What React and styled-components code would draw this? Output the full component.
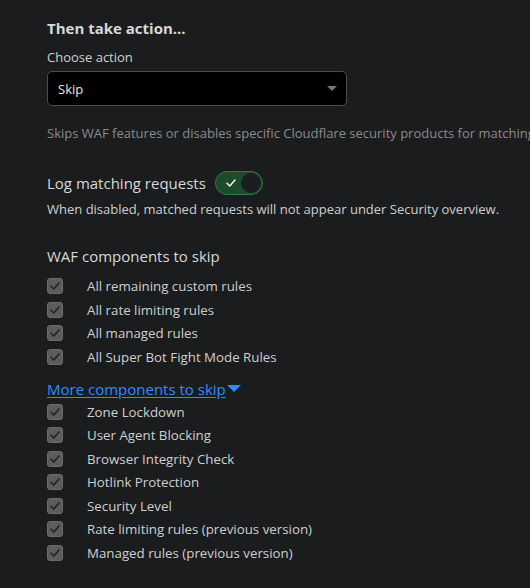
import styled, { createGlobalStyle } from "styled-components";

const GlobalStyle = createGlobalStyle`
  body {
    margin: 0;
    background: #1b1c1e;
    font-family: "Open Sans", "Liberation Sans", sans-serif;
    color: #d6d6d6;
  }
`;

const wafItems = [
  "All remaining custom rules",
  "All rate limiting rules",
  "All managed rules",
  "All Super Bot Fight Mode Rules",
];

const moreItems = [
  "Zone Lockdown",
  "User Agent Blocking",
  "Browser Integrity Check",
  "Hotlink Protection",
  "Security Level",
  "Rate limiting rules (previous version)",
  "Managed rules (previous version)",
];

function CheckIcon({ color }) {
  return (
    <svg width="10" height="8" viewBox="0 0 10 8" fill="none">
      <path d="M1 4.2 L3.8 7 L9 1" stroke={color} strokeWidth="1.6" strokeLinecap="round" strokeLinejoin="round" />
    </svg>
  );
}

function CheckRow({ label }) {
  return (
    <Row>
      <Box>
        <CheckIcon color="#232323" />
      </Box>
      <RowLabel>{label}</RowLabel>
    </Row>
  );
}

export default function App() {
  return (
    <Page>
      <GlobalStyle />
      <Heading>Then take action...</Heading>
      <FieldLabel>Choose action</FieldLabel>
      <Select>
        <span>Skip</span>
        <Caret />
      </Select>
      <Hint>Skips WAF features or disables specific Cloudflare security products for matching requests.</Hint>

      <ToggleLine>
        <Title>Log matching requests</Title>
        <Toggle>
          <CheckIcon color="#e8f0ea" />
          <Knob />
        </Toggle>
      </ToggleLine>
      <Note>When disabled, matched requests will not appear under Security overview.</Note>

      <Section>WAF components to skip</Section>
      <List $top={9}>
        {wafItems.map((item) => (
          <CheckRow key={item} label={item} />
        ))}
      </List>

      <MoreLink>
        More components to skip
        <Triangle />
      </MoreLink>
      <List $top={2}>
        {moreItems.map((item) => (
          <CheckRow key={item} label={item} />
        ))}
      </List>
    </Page>
  );
}

const Page = styled.div`
  padding: 17px 0 20px 47px;
  width: 483px;
  overflow: hidden;
`;

const Heading = styled.h2`
  margin: 0;
  font-size: 15px;
  font-weight: 700;
  line-height: 22px;
  color: #d8d8d8;
`;

const FieldLabel = styled.div`
  margin-top: 8px;
  font-size: 13px;
  line-height: 20px;
  color: #cfcfcf;
`;

const Select = styled.div`
  margin-top: 4px;
  box-sizing: border-box;
  width: 300px;
  height: 35px;
  display: flex;
  align-items: center;
  justify-content: space-between;
  padding: 0 9px 0 10px;
  background: #000;
  border: 1px solid #4f4c47;
  border-radius: 5px;
  font-size: 13px;
  color: #e6e6e6;
`;

const Caret = styled.span`
  width: 0;
  height: 0;
  border-left: 5px solid transparent;
  border-right: 5px solid transparent;
  border-top: 5px solid #7c766c;
`;

const Hint = styled.div`
  margin-top: 17px;
  font-size: 13px;
  line-height: 20px;
  white-space: nowrap;
  color: #8b8b8b;
`;

const ToggleLine = styled.div`
  margin-top: 28px;
  display: flex;
  align-items: center;
  gap: 9px;
`;

const Title = styled.div`
  font-size: 15px;
  line-height: 24px;
  color: #d8d8d8;
`;

const Toggle = styled.div`
  box-sizing: border-box;
  width: 48px;
  height: 24px;
  display: flex;
  align-items: center;
  justify-content: space-between;
  padding: 0 1px 0 10px;
  background: #1d4b2b;
  border: 1px solid #2e7a45;
  border-radius: 12px;
`;

const Knob = styled.span`
  width: 20px;
  height: 20px;
  border-radius: 50%;
  background: #1c1d1f;
`;

const Note = styled.div`
  margin-top: 4px;
  font-size: 13px;
  line-height: 20px;
  color: #cfcfcf;
`;

const Section = styled.div`
  margin-top: 26px;
  font-size: 15px;
  line-height: 22px;
  color: #d8d8d8;
`;

const List = styled.div`
  margin-top: ${(p) => p.$top}px;
  display: flex;
  flex-direction: column;
  gap: 3.5px;
`;

const Row = styled.div`
  display: flex;
  align-items: center;
  height: 20px;
`;

const Box = styled.span`
  box-sizing: border-box;
  width: 16px;
  height: 16px;
  display: flex;
  align-items: center;
  justify-content: center;
  background: #5c5c5c;
  border: 1px solid #6b6b6b;
  border-radius: 3px;
`;

const RowLabel = styled.span`
  margin-left: 24px;
  font-size: 13.3px;
  color: #cfcfcf;
`;

const MoreLink = styled.a`
  display: inline-flex;
  align-items: center;
  margin-top: 12px;
  font-size: 15px;
  line-height: 20px;
  color: #2f8bff;
  text-decoration: underline;
  text-underline-offset: 2px;
  cursor: pointer;
`;

const Triangle = styled.span`
  margin-left: 1px;
  width: 0;
  height: 0;
  border-left: 7px solid transparent;
  border-right: 7px solid transparent;
  border-top: 7px solid #2f8bff;
`;
